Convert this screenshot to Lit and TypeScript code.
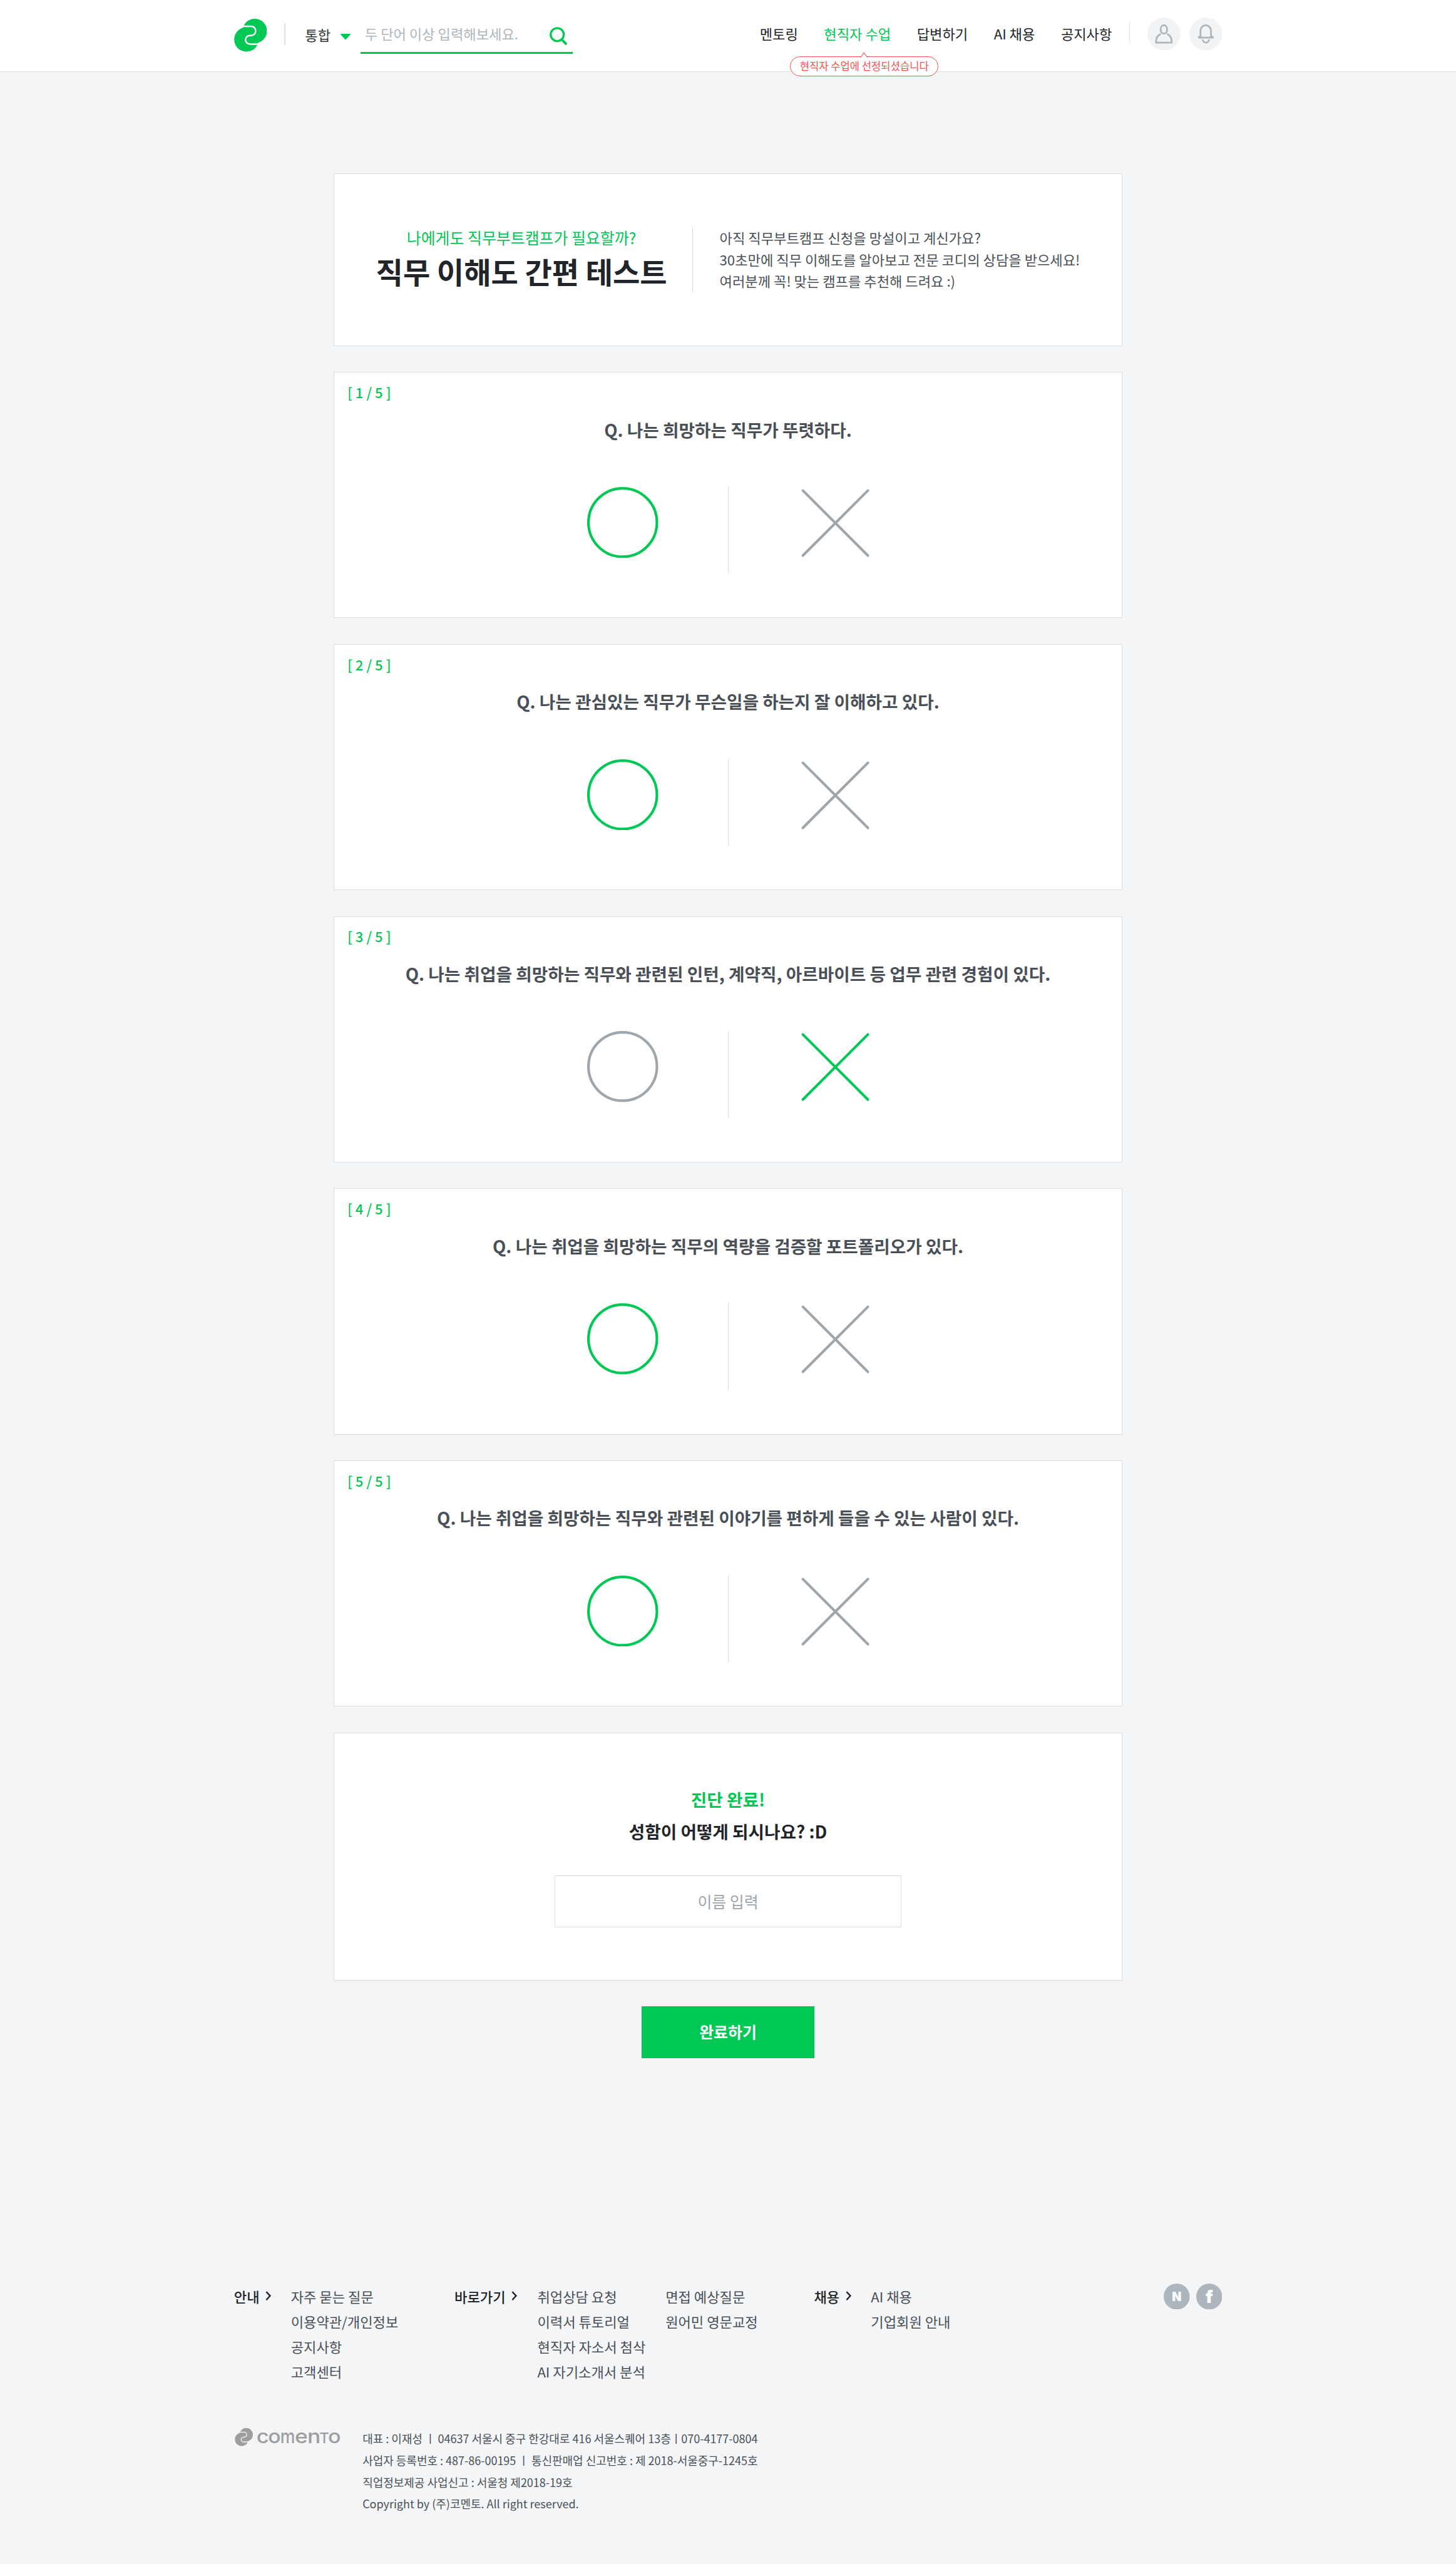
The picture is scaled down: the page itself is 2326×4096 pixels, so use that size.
import { LitElement, html, css, svg } from "lit";
import { customElement, property } from "lit/decorators.js";
import { classMap } from "lit/directives/class-map.js";

const symbol = (fill: string, gap: string) => svg`
  <circle cx="14.2" cy="23.9" r="14.1" fill=${fill}></circle>
  <circle cx="23.8" cy="14.1" r="14.1" fill=${fill}></circle>
  <path d="M7.5 8.75H19.6a5.2 5.2 0 0 1 0 10.5H18.2a5 5 0 0 0 0 10H31" fill="none" stroke=${gap} stroke-width="1.8"></path>`;

@customElement("site-header")
export class SiteHeader extends LitElement {
  static styles = css`
    :host { display: block; }
    .bar { box-sizing: border-box; height: 83px; background: #fff; border-bottom: 1px solid #d9dee2; }
    .inner { width: 1140px; margin: 0 auto; height: 82px; display: flex; align-items: flex-start; }
    .logo { width: 38px; height: 38px; margin-top: 22px; display: block; }
    .rule { width: 1px; height: 25px; background: #dee2e6; margin: 27px 0 0 20px; }
    .scope { margin: 28px 0 0 23px; line-height: 24px; font-size: 16px; color: #343434; width: 30px; white-space: nowrap; }
    .arrow { width: 13px; height: 7px; margin: 39px 0 0 10px; display: block; }
    .search { box-sizing: border-box; width: 245px; height: 62px; margin-left: 11px; border-bottom: 2.2px solid #00c854; display: flex; justify-content: space-between; padding: 27px 6px 0 5px; }
    .hint { font-size: 16px; line-height: 24px; color: #adb5bd; white-space: nowrap; }
    .glass { width: 21px; height: 21px; margin-top: 4px; display: block; }
    .nav { display: flex; gap: 30px; margin: 27px 0 0 auto; }
    .item { font-size: 16px; line-height: 24px; color: #212529; white-space: nowrap; position: relative; }
    .on { color: #00c854; }
    .tip { position: absolute; left: -39px; top: 38px; box-sizing: border-box; width: 171px; height: 23px; border: 1px solid #fa5252; border-radius: 12px; background: #fff; color: #fa5252; font-size: 12px; line-height: 21px; text-align: center; }
    .beak { position: absolute; left: 80px; top: -6px; width: 9px; height: 7px; display: block; }
    .rule.end { margin: 25px 0 0 20px; }
    .round { width: 38px; height: 38px; margin: 20px 0 0 20px; display: block; }
    .round + .round { margin-left: 10px; }
  `;

  render() {
    return html`
      <div class="bar"><div class="inner">
        <svg class="logo" viewBox="0 0 38 38">${symbol("#00c854", "#fff")}</svg>
        <div class="rule"></div>
        <div class="scope">통합</div>
        <svg class="arrow" viewBox="0 0 13 7"><path d="M.2 0H12.8L6.5 7Z" fill="#00c854"/></svg>
        <div class="search">
          <span class="hint">두 단어 이상 입력해보세요.</span>
          <svg class="glass" viewBox="0 0 21 21" fill="none" stroke="#00c854" stroke-width="2.4"><circle cx="8.8" cy="8.8" r="7.5"/><path d="M13.8 14.3L19.6 20.2" stroke-width="2.8"/></svg>
        </div>
        <div class="nav">
          <div class="item">멘토링</div>
          <div class="item on">현직자 수업
            <div class="tip">현직자 수업에 선정되셨습니다
              <svg class="beak" viewBox="0 0 9 7"><path d="M.5 6.8L4.5 .8L8.5 6.8Z" fill="#fff"/><path d="M.5 6.3L4.5 .8L8.5 6.3" fill="none" stroke="#fa5252" stroke-width=".8"/></svg>
            </div>
          </div>
          <div class="item">답변하기</div>
          <div class="item">AI 채용</div>
          <div class="item">공지사항</div>
        </div>
        <div class="rule end"></div>
        <svg class="round" viewBox="0 0 38 38" fill="none" stroke="#adb5bd" stroke-width="2">
          <circle cx="19" cy="19" r="19" fill="#f1f3f5" stroke="none"/>
          <rect x="15.3" y="9" width="7.4" height="9.5" rx="3.7" ry="4"/>
          <path d="M15.4 18.9C12 20.4 10 23.2 10 27V29H28V27C28 23.2 26 20.4 22.6 18.9"/>
        </svg>
        <svg class="round" viewBox="0 0 38 38" fill="none" stroke="#adb5bd" stroke-width="2">
          <circle cx="19" cy="19" r="19" fill="#f1f3f5" stroke="none"/>
          <path d="M12.8 22.5V15.1a6.1 6.1 0 0 1 12.2 0V22.5"/>
          <path d="M11 23.2H27" stroke-linecap="round"/>
          <path d="M11.4 22.6H13M24.9 22.6H26.6" stroke-width="3" stroke-linecap="round"/>
          <path d="M15.5 25.3a3.6 3.7 0 0 0 7.2 0"/>
        </svg>
      </div></div>`;
  }
}

@customElement("quiz-card")
export class QuizCard extends LitElement {
  @property({ type: Number }) index = 1;
  @property() question = "";
  @property() answer: "o" | "x" = "o";

  static styles = css`
    :host { display: block; }
    .card { box-sizing: border-box; height: 284px; background: #fff; border: 1px solid #d9dee2; padding: 10.6px 15.1px 0; }
    .count { font-size: 16px; line-height: 24px; font-weight: 500; color: #00c854; }
    .q { margin-top: 16.2px; font-size: 20px; line-height: 30px; font-weight: 700; color: #495057; text-align: center; white-space: nowrap; }
    .choices { display: flex; gap: 80px; margin: 51.2px 0 0 277px; }
    .o { width: 82px; height: 82px; display: block; }
    .x { width: 86px; height: 86px; margin-top: -1.5px; display: block; }
    .o, .x { fill: none; stroke: #9ea5ab; stroke-width: 3; stroke-linecap: round; }
    .o.picked, .x.picked { stroke: #00c854; }
    .split { width: 1px; height: 100px; background: #d9dee2; }
  `;

  render() {
    return html`
      <div class="card">
        <div class="count">[ ${this.index} / 5 ]</div>
        <div class="q">Q. ${this.question}</div>
        <div class="choices">
          <svg class=${classMap({ o: true, picked: this.answer === "o" })} viewBox="0 0 82 82"><circle cx="41" cy="41" r="39.5"/></svg>
          <div class="split"></div>
          <svg class=${classMap({ x: true, picked: this.answer === "x" })} viewBox="0 0 86 86"><path d="M5.5 5.5L80.5 80.5M80.5 5.5L5.5 80.5"/></svg>
        </div>
      </div>`;
  }
}

interface Letter { ch: string; x: number; w: number; size: number; }

const wordmark: Letter[] = [
  { ch: "c", x: 25.8, w: 14.4, size: 22.5 },
  { ch: "o", x: 39.2, w: 14.7, size: 22.5 },
  { ch: "m", x: 53.2, w: 17.1, size: 22.5 },
  { ch: "e", x: 70.1, w: 15, size: 22.5 },
  { ch: "n", x: 84.5, w: 15.4, size: 22.5 },
  { ch: "T", x: 98.5, w: 11.3, size: 17 },
  { ch: "o", x: 108.4, w: 14.9, size: 22.5 },
];

@customElement("site-footer")
export class SiteFooter extends LitElement {
  static styles = css`
    :host { display: block; }
    .inner { width: 1140px; margin: 0 auto; }
    .links { display: flex; align-items: flex-start; line-height: 29px; font-size: 16px; color: #495057; white-space: nowrap; }
    .group { display: flex; }
    .about { width: 254.4px; }
    .short { width: 414.9px; }
    .head { display: flex; font-weight: 500; color: #212529; }
    .about .head { width: 65.6px; }
    .short .head { width: 95.6px; }
    .hire .head { width: 65.6px; }
    .col + .col { margin-left: 23px; }
    .chev { width: 7px; height: 11px; margin: 9px 0 0 7px; display: block; }
    .social { display: flex; gap: 7px; margin-left: auto; }
    .badge { width: 30px; height: 30px; display: block; }
    .legal { display: flex; margin-top: 50.5px; }
    .brand { width: 126px; height: 38px; margin-top: -8.5px; display: block; }
    .info { margin-left: 22.3px; font-size: 13px; line-height: 25px; color: #495057; white-space: nowrap; }
    .word { font-family: Inter, "Open Sans", sans-serif; font-weight: 500; }
    .heavy { font-family: Inter, Roboto, sans-serif; font-weight: 900; }
  `;

  private head(label: string) {
    return html`<div class="head">${label}<svg class="chev" viewBox="0 0 7 11"><path d="M1 .8L5.4 5.5L1 10.2" fill="none" stroke="#212529" stroke-width="1.7"/></svg></div>`;
  }

  private col(items: string[]) {
    return html`<div class="col">${items.map((t) => html`<div>${t}</div>`)}</div>`;
  }

  render() {
    return html`
      <div class="inner">
        <div class="links">
          <div class="group about">${this.head("안내")}${this.col(["자주 묻는 질문", "이용약관/개인정보", "공지사항", "고객센터"])}</div>
          <div class="group short">${this.head("바로가기")}${this.col(["취업상담 요청", "이력서 튜토리얼", "현직자 자소서 첨삭", "AI 자기소개서 분석"])}${this.col(["면접 예상질문", "원어민 영문교정"])}</div>
          <div class="group hire">${this.head("채용")}${this.col(["AI 채용", "기업회원 안내"])}</div>
          <div class="social">
            <svg class="badge" viewBox="0 0 30 30"><circle cx="15" cy="15" r="15" fill="#adb5bd"/><text class="heavy" x="15" y="20.2" font-size="14.2" text-anchor="middle" fill="#fff">N</text></svg>
            <svg class="badge" viewBox="0 0 30 30"><circle cx="15" cy="15" r="15" fill="#adb5bd"/><text class="heavy" x="15" y="22.6" font-size="20" text-anchor="middle" fill="#fff">f</text></svg>
          </div>
        </div>
        <div class="legal">
          <svg class="brand" viewBox="0 -8 126 38">
            <g transform="translate(.9 .5) scale(.548)">${symbol("#9e9e9e", "#f3f5f7")}</g>
            ${wordmark.map((l) => svg`<text class="word" x=${l.x} y="18" font-size=${l.size} textLength=${l.w} lengthAdjust="spacingAndGlyphs" fill="#9e9e9e">${l.ch}</text>`)}
          </svg>
          <div class="info">
            <div>대표 : 이재성 ㅣ 04637 서울시 중구 한강대로 416 서울스퀘어 13층ㅣ070-4177-0804</div>
            <div>사업자 등록번호 : 487-86-00195 ㅣ 통신판매업 신고번호 : 제 2018-서울중구-1245호</div>
            <div>직업정보제공 사업신고 : 서울청 제2018-19호</div>
            <div>Copyright by (주)코멘토. All right reserved.</div>
          </div>
        </div>
      </div>`;
  }
}

const questions: { text: string; answer: "o" | "x" }[] = [
  { text: "나는 희망하는 직무가 뚜렷하다.", answer: "o" },
  { text: "나는 관심있는 직무가 무슨일을 하는지 잘 이해하고 있다.", answer: "o" },
  { text: "나는 취업을 희망하는 직무와 관련된 인턴, 계약직, 아르바이트 등 업무 관련 경험이 있다.", answer: "x" },
  { text: "나는 취업을 희망하는 직무의 역량을 검증할 포트폴리오가 있다.", answer: "o" },
  { text: "나는 취업을 희망하는 직무와 관련된 이야기를 편하게 들을 수 있는 사람이 있다.", answer: "o" },
];

@customElement("app-root")
export class AppRoot extends LitElement {
  static styles = css`
    :host { display: block; font-family: "Noto Sans CJK KR", "Noto Sans", sans-serif; }
    .page { zoom: 1.384524; width: 1680px; height: 2958.5px; overflow: hidden; background: #f3f5f7; display: flex; flex-direction: column; }
    .main { width: 910px; margin: 117.2px auto 0; display: flex; flex-direction: column; gap: 30px; }
    .card { box-sizing: border-box; background: #fff; border: 1px solid #d9dee2; }
    .intro { height: 199px; display: flex; align-items: center; white-space: nowrap; }
    .lead { width: 394px; margin: -1.4px 0 0 19px; text-align: center; }
    .ask { font-size: 18px; line-height: 27px; color: #00c854; }
    .title { font-size: 34px; line-height: 50px; font-weight: 700; color: #212529; }
    .split { width: 1px; height: 75px; background: #d9dee2; }
    .copy { margin: -1.4px 0 0 30.6px; font-size: 16px; line-height: 25px; color: #495057; }
    .finish { height: 286px; display: flex; flex-direction: column; align-items: center; padding-top: 57.5px; font-size: 20px; line-height: 37px; font-weight: 700; color: #212529; }
    .done { color: #00c854; }
    .name { box-sizing: border-box; width: 400px; height: 60px; margin-top: 32.7px; border: 1px solid #d9dee2; text-align: center; font-size: 18px; line-height: 59px; font-weight: 400; color: #9ea5ab; }
    .submit { width: 200px; height: 60px; align-self: center; background: #00c854; color: #fff; font-size: 18px; line-height: 58px; font-weight: 700; text-align: center; }
    .foot { margin-top: 259.6px; }
  `;

  render() {
    return html`
      <div class="page">
        <site-header></site-header>
        <div class="main">
          <div class="card intro">
            <div class="lead">
              <div class="ask">나에게도 직무부트캠프가 필요할까?</div>
              <div class="title">직무 이해도 간편 테스트</div>
            </div>
            <div class="split"></div>
            <div class="copy">
              <div>아직 직무부트캠프 신청을 망설이고 계신가요?</div>
              <div>30초만에 직무 이해도를 알아보고 전문 코디의 상담을 받으세요!</div>
              <div>여러분께 꼭! 맞는 캠프를 추천해 드려요 :)</div>
            </div>
          </div>
          ${questions.map((q, i) => html`<quiz-card .index=${i + 1} .question=${q.text} .answer=${q.answer}></quiz-card>`)}
          <div class="card finish">
            <div class="done">진단 완료!</div>
            <div>성함이 어떻게 되시나요? :D</div>
            <div class="name">이름 입력</div>
          </div>
          <div class="submit">완료하기</div>
        </div>
        <site-footer class="foot"></site-footer>
      </div>`;
  }
}
